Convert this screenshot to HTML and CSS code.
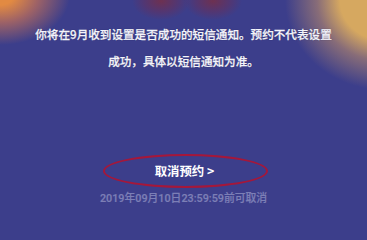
FILE: index.html
```html
<!DOCTYPE html>
<html lang="zh">
<head>
<meta charset="utf-8">
<link rel="stylesheet" href="styles.css">
</head>
<body>
<div class="screen">
  <div class="glow glow-left"></div>
  <div class="glow glow-center-a"></div>
  <div class="glow glow-center-b"></div>
  <div class="glow glow-right"></div>
  <div class="content">
    <p class="notice">你将在9月收到设置是否成功的短信通知。预约不代表设置<br>成功，具体以短信通知为准。</p>
    <div class="action">
      <span class="cancel">取消预约 &gt;</span>
      <span class="ring"></span>
    </div>
    <p class="deadline">2019年09月10日23:59:59前可取消</p>
  </div>
</div>
</body>
</html>
```

FILE: styles.css
```css
html, body {
  margin: 0;
  padding: 0;
  background: #3c3e8b;
}
body {
  width: 367px;
  height: 213px;
  overflow: hidden;
  font-family: "Noto Sans CJK SC", "Noto Sans", sans-serif;
}
.screen {
  position: relative;
  width: 367px;
  height: 213px;
  overflow: hidden;
  background: #3c3e8b;
}
.glow {
  position: absolute;
  border-radius: 50%;
  pointer-events: none;
}
.glow-left {
  left: -70px;
  top: -55px;
  width: 140px;
  height: 100px;
  background: radial-gradient(closest-side, rgba(226,138,66,1) 20%, rgba(190,110,90,0.75) 55%, rgba(60,62,139,0));
}
.glow-center-a {
  left: 132px;
  top: -18px;
  width: 58px;
  height: 38px;
  background: radial-gradient(closest-side, rgba(112,48,78,0.95), rgba(95,50,100,0.6) 60%, rgba(60,62,139,0));
}
.glow-center-b {
  left: 184px;
  top: -18px;
  width: 58px;
  height: 38px;
  background: radial-gradient(closest-side, rgba(112,48,78,0.95), rgba(95,50,100,0.6) 60%, rgba(60,62,139,0));
}
.glow-right {
  left: 285px;
  top: -90px;
  width: 200px;
  height: 180px;
  background: radial-gradient(closest-side, rgba(214,168,96,1) 45%, rgba(168,128,112,0.7) 68%, rgba(60,62,139,0));
}
.content {
  position: relative;
  display: flex;
  flex-direction: column;
  align-items: center;
  padding: 21px 20px 0;
}
.notice {
  margin: 0;
  color: #f4f4fb;
  font-size: 11.6px;
  font-weight: 500;
  line-height: 27px;
  text-align: center;
  white-space: nowrap;
  -webkit-text-stroke: 0.25px #f4f4fb;
  text-shadow: 0 0 1px rgba(20,20,60,0.7);
}
.action {
  position: relative;
  margin-top: 84px;
  display: flex;
  justify-content: center;
  align-items: center;
  height: 24px;
}
.cancel {
  color: #ffffff;
  font-size: 12.4px;
  font-weight: bold;
  line-height: 24px;
  margin-left: 2px;
}
.ring {
  position: absolute;
  left: 50%;
  top: 50%;
  width: 165px;
  height: 34px;
  margin-left: -81px;
  margin-top: -17px;
  border: 2.5px solid #a5173a;
  border-radius: 50%;
  box-sizing: border-box;
}
.deadline {
  margin: 8px 0 0;
  color: #7c7fb6;
  font-size: 10.8px;
  font-weight: 500;
  line-height: 16px;
  -webkit-text-stroke: 0.2px #7c7fb6;
  font-family: "Roboto", "Noto Sans CJK SC", sans-serif;
}
```
